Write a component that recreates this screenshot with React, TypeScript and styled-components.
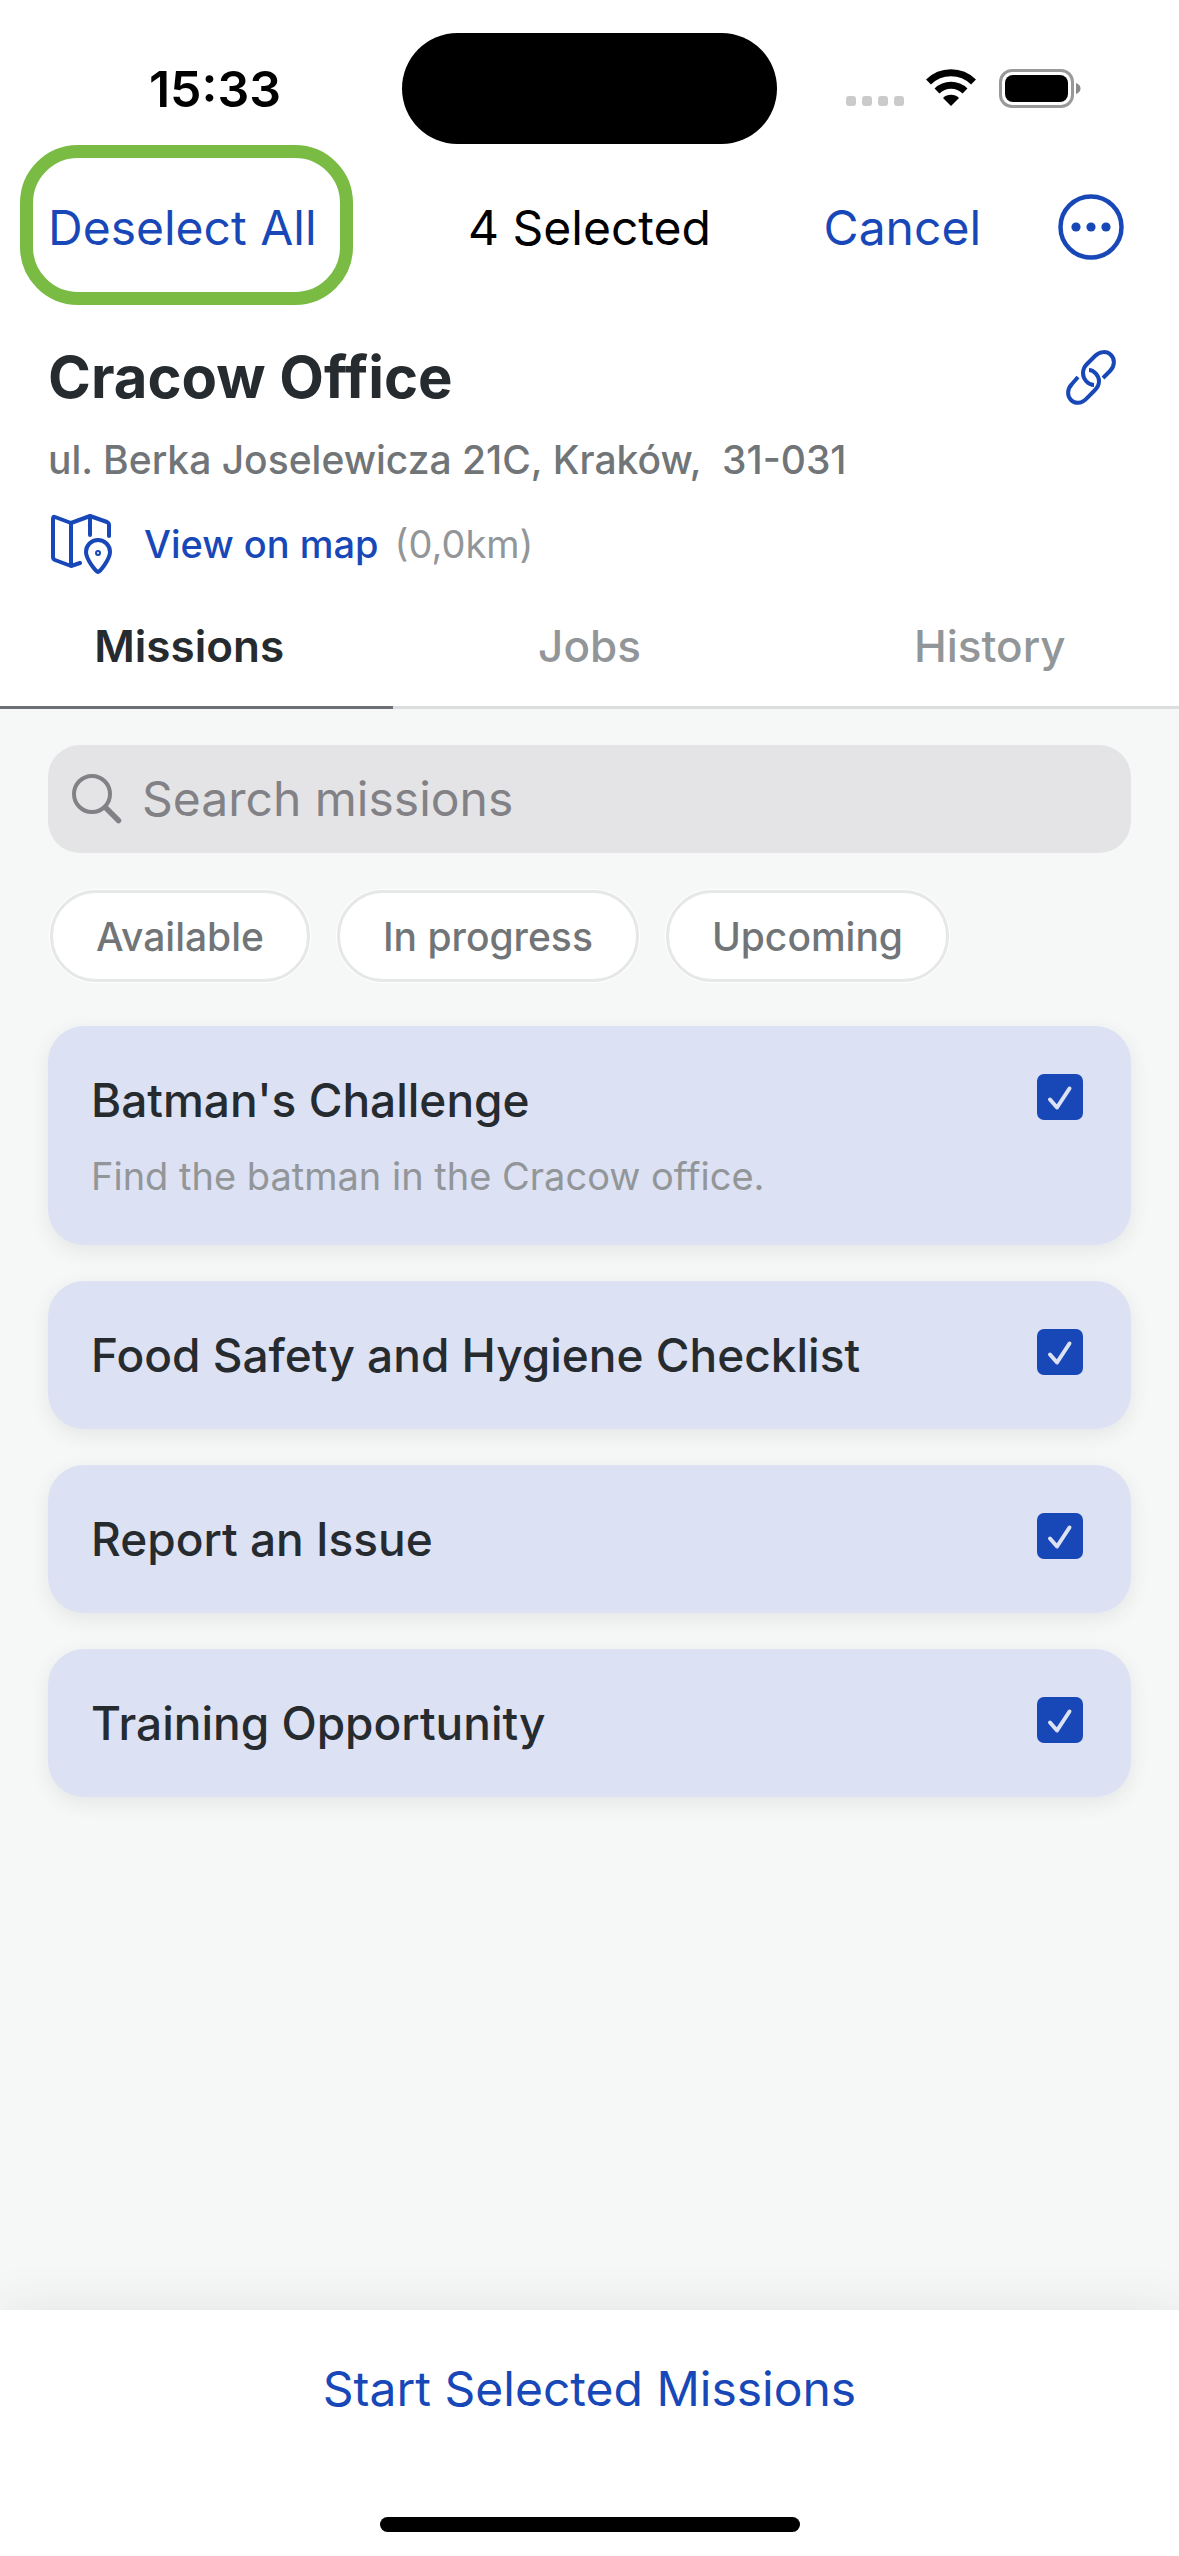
import React, { useState } from "react";
import styled, { createGlobalStyle } from "styled-components";

const BLUE = "#1848b8";
const INK = "#262b2f";
const GREY = "#717578";
const MUTED = "#929698";

const GlobalStyle = createGlobalStyle`
  *, *::before, *::after { box-sizing: border-box; }
  body {
    margin: 0;
    background: #f6f8f7;
    font-family: Inter, "Liberation Sans", sans-serif;
    color: ${INK};
  }
  button, input { font: inherit; }
  h1, h2, p, ul { margin: 0; padding: 0; }
`;

const Screen = styled.div`
  display: flex;
  flex-direction: column;
  min-height: 100vh;
`;

const Header = styled.header`
  background: #fff;
`;

const StatusBar = styled.div`
  display: grid;
  grid-template-columns: 1fr 375px 1fr;
  align-items: center;
  padding-top: 33px;
`;

const Clock = styled.time`
  padding-left: 28px;
  text-align: center;
  font-size: 50px;
  line-height: 60px;
  font-weight: 600;
  color: #000;
`;

const Island = styled.div`
  height: 111px;
  border-radius: 56px;
  background: #000;
`;

const StatusIcons = styled.svg`
  justify-self: end;
  margin-right: 98px;
  width: 236px;
  height: 40px;
`;

const NavBar = styled.nav`
  display: grid;
  grid-template-columns: 1fr auto 1fr;
  align-items: center;
  height: 168px;
  padding: 0 48px;
`;

const TextButton = styled.button`
  justify-self: start;
  padding: 0;
  border: 0;
  background: none;
  color: ${BLUE};
  font-size: 48px;
  line-height: 60px;
  white-space: nowrap;
  cursor: pointer;
`;

const HighlightedButton = styled(TextButton)`
  position: relative;

  &::after {
    content: "";
    position: absolute;
    inset: -53px -36px -47px -28px;
    border: 13px solid #79bb43;
    border-radius: 58px;
    pointer-events: none;
  }
`;

const NavTitle = styled.h2`
  font-size: 48px;
  line-height: 60px;
  font-weight: 400;
  color: #000;
`;

const NavActions = styled.div`
  display: flex;
  justify-content: flex-end;
  align-items: center;
  gap: 77px;
  padding-right: 7px;
`;

const IconButton = styled.button`
  display: block;
  padding: 0;
  border: 0;
  background: none;
  color: ${BLUE};
  cursor: pointer;

  svg { display: block; }
`;

const Place = styled.section`
  display: flex;
  flex-direction: column;
  padding: 29px 58px 12px 48px;
`;

const TitleRow = styled.div`
  display: flex;
  justify-content: space-between;
  align-items: center;
`;

const PlaceName = styled.h1`
  font-size: 58px;
  line-height: 72px;
  font-weight: 700;
`;

const Address = styled.p`
  margin-top: 22px;
  font-size: 39px;
  line-height: 50px;
  font-weight: 500;
  color: ${GREY};
  white-space: pre-wrap;
`;

const MapRow = styled.div`
  display: flex;
  align-items: center;
  margin-top: 29px;
  height: 60px;
  font-size: 38px;
  line-height: 50px;
  color: ${MUTED};
`;

const MapLink = styled.a`
  display: flex;
  align-items: center;
  gap: 32px;
  margin-right: 16px;
  color: ${BLUE};
  font-weight: 500;
  text-decoration: none;
`;

const Tabs = styled.div`
  display: grid;
  grid-template-columns: repeat(3, 1fr);
  gap: 22px;
`;

const Tab = styled.button<{ $active: boolean }>`
  height: 120px;
  padding: 0;
  border: 0;
  background: none;
  font-size: 44px;
  font-weight: ${(p) => (p.$active ? 600 : 500)};
  color: ${(p) => (p.$active ? INK : MUTED)};
  cursor: pointer;
`;

const TabTrack = styled.div<{ $index: number }>`
  height: 3px;
  background: #dcdedd;

  &::before {
    content: "";
    display: block;
    width: 33.33%;
    height: 3px;
    margin-left: calc(33.33% * ${(p) => p.$index});
    background: #6c7074;
  }
`;

const Main = styled.main`
  display: flex;
  flex-direction: column;
  flex: 1;
  padding: 36px 48px;
`;

const SearchBox = styled.label`
  display: flex;
  align-items: center;
  gap: 20px;
  height: 108px;
  padding: 0 24px;
  border-radius: 32px;
  background: #e4e4e6;
  color: #828186;

  svg { flex: none; }
`;

const SearchInput = styled.input`
  flex: 1;
  min-width: 0;
  padding: 0;
  border: 0;
  outline: 0;
  background: none;
  appearance: none;
  font-size: 48px;
  line-height: 60px;
  color: ${INK};

  &::placeholder { color: #828186; opacity: 1; }
`;

const Chips = styled.div`
  display: flex;
  gap: 27px;
  margin: 37px 2px 44px;
`;

const Chip = styled.button`
  height: 92px;
  padding: 0 43px;
  border: 3px solid #e6e7e7;
  border-radius: 46px;
  background: #fff;
  box-shadow: 0 0 0 1px #fff;
  font-size: 39px;
  font-weight: 500;
  color: ${GREY};
  cursor: pointer;
`;

const MissionList = styled.ul`
  display: flex;
  flex-direction: column;
  gap: 36px;
  list-style: none;
`;

const Card = styled.label<{ $selected: boolean }>`
  display: flex;
  justify-content: space-between;
  align-items: flex-start;
  padding: 44px 48px 44px 43px;
  border-radius: 36px;
  background: ${(p) => (p.$selected ? "#dce1f4" : "#fff")};
  box-shadow: 0 6px 20px rgba(40, 50, 40, 0.09);
  cursor: pointer;
`;

const CardText = styled.span`
  display: flex;
  flex-direction: column;
  gap: 21px;
`;

const MissionName = styled.span`
  font-size: 46px;
  line-height: 60px;
  font-weight: 500;
`;

const MissionNote = styled.span`
  font-size: 38px;
  line-height: 50px;
  color: ${MUTED};
`;

const CheckCell = styled.span`
  display: grid;
  flex: none;
  margin-top: 4px;

  > * { grid-area: 1 / 1; }
  svg { pointer-events: none; }
`;

const CheckBox = styled.input`
  appearance: none;
  width: 46px;
  height: 46px;
  margin: 0;
  border: 3px solid ${BLUE};
  border-radius: 7px;

  &:checked { background: ${BLUE}; }
`;

const Footer = styled.footer`
  display: flex;
  flex-direction: column;
  align-items: center;
  padding: 49px 48px 24px;
  background: #fff;
  box-shadow: 0 0 48px rgba(40, 50, 40, 0.1);
`;

const StartButton = styled(TextButton)`
  align-self: center;
`;

const HomeIndicator = styled.div`
  width: 420px;
  max-width: 60%;
  height: 15px;
  margin-top: 98px;
  border-radius: 8px;
  background: #000;
`;

const missions = [
  { name: "Batman's Challenge", note: "Find the batman in the Cracow office." },
  { name: "Food Safety and Hygiene Checklist" },
  { name: "Report an Issue" },
  { name: "Training Opportunity" },
];

const tabs = ["Missions", "Jobs", "History"];
const filters = ["Available", "In progress", "Upcoming"];

function StatusGlyphs() {
  return (
    <StatusIcons viewBox="0 0 236 40" aria-hidden="true">
      {[1, 17, 33, 49].map((x) => (
        <rect key={x} x={x} y="27" width="10" height="10" rx="3" fill="#cbcbcb" />
      ))}
      <g fill="none" stroke="#000" strokeWidth="7">
        <path d="M83.500 13a32 32 0 0 1 45 0" />
        <path d="M92 22a20 20 0 0 1 28 0" />
      </g>
      <path d="M106 37l-8-8a11.500 11.500 0 0 1 16 0z" />
      <rect x="155.500" y="1.500" width="72" height="36" rx="11.500" fill="none" stroke="#999" strokeWidth="3" />
      <rect x="160" y="6" width="63" height="27" rx="8" />
      <path d="M231 14c3 1 4.500 3 4.500 5.500S234 24 231 25z" fill="#8a8a8a" />
    </StatusIcons>
  );
}

export default function App() {
  const [picked, setPicked] = useState(missions.map(() => true));
  const [tab, setTab] = useState(0);
  const count = picked.filter(Boolean).length;

  return (
    <Screen>
      <GlobalStyle />
      <Header>
        <StatusBar>
          <Clock>15:33</Clock>
          <Island />
          <StatusGlyphs />
        </StatusBar>
        <NavBar>
          <HighlightedButton onClick={() => setPicked(missions.map(() => false))}>Deselect All</HighlightedButton>
          <NavTitle>{count} Selected</NavTitle>
          <NavActions>
            <TextButton>Cancel</TextButton>
            <IconButton aria-label="More options">
              <svg width="66" height="68" viewBox="0 0 66 68">
                <circle cx="33" cy="33" r="30.500" fill="none" stroke="currentColor" strokeWidth="4.500" />
                {[18, 33, 48].map((x) => (
                  <circle key={x} cx={x} cy="33" r="4.600" fill="currentColor" />
                ))}
              </svg>
            </IconButton>
          </NavActions>
        </NavBar>
        <Place>
          <TitleRow>
            <PlaceName>Cracow Office</PlaceName>
            <IconButton aria-label="Copy link">
              <svg width="60" height="60" viewBox="0 0 60 60" fill="none" stroke="currentColor" strokeWidth="4">
                <path d="M28 23C33 23 38 29 38 34c0 3-1 6-4 9l-8 8c-5 6-12 6-16 2s-4-11 1-16l6-7" />
                <path d="M33 38C27 38 22 32 22 26c0-3 1-6 4-9l8-8c5-5 12-5 16-1s4 11-1 16l-7 7" />
              </svg>
            </IconButton>
          </TitleRow>
          <Address>{"ul. Berka Joselewicza 21C, Kraków,  31-031"}</Address>
          <MapRow>
            <MapLink href="#map">
              <svg width="64" height="60" viewBox="0 0 64 60" fill="none" stroke="currentColor" strokeWidth="4" strokeLinecap="round" strokeLinejoin="round">
                <path d="M61 22V11q0-2-2-3L42 2 23 9 7 3Q5 2 5 5v38q0 2 2 3l16 6 9-3" />
                <path d="M23 9v42M42 3v18" />
                <path d="M50 58c-2 0-12-13-12-20a12 12 0 0 1 24 0c0 7-10 20-12 20z" />
                <circle cx="50" cy="39" r="1" />
              </svg>
              View on map
            </MapLink>
            <span>(0,0km)</span>
          </MapRow>
        </Place>
        <Tabs role="tablist">
          {tabs.map((name, i) => (
            <Tab key={name} role="tab" aria-selected={i === tab} $active={i === tab} onClick={() => setTab(i)}>
              {name}
            </Tab>
          ))}
        </Tabs>
        <TabTrack $index={tab} />
      </Header>
      <Main>
        <SearchBox>
          <svg width="50" height="50" viewBox="0 0 50 50" fill="none" stroke="currentColor" strokeLinecap="round">
            <circle cx="20" cy="20" r="18" strokeWidth="4" />
            <path d="M33.500 33.500L46.500 46.500" strokeWidth="5.500" />
          </svg>
          <SearchInput type="search" placeholder="Search missions" aria-label="Search missions" />
        </SearchBox>
        <Chips>
          {filters.map((name) => (
            <Chip key={name}>{name}</Chip>
          ))}
        </Chips>
        <MissionList>
          {missions.map((m, i) => (
            <li key={m.name}>
              <Card $selected={picked[i]}>
                <CardText>
                  <MissionName>{m.name}</MissionName>
                  {m.note && <MissionNote>{m.note}</MissionNote>}
                </CardText>
                <CheckCell>
                  <CheckBox
                    type="checkbox"
                    checked={picked[i]}
                    onChange={() => setPicked(picked.map((on, j) => (j === i ? !on : on)))}
                  />
                  {picked[i] && (
                    <svg width="46" height="46" viewBox="0 0 46 46" fill="none" stroke="#dce1f4" strokeWidth="4" strokeLinecap="round" strokeLinejoin="round">
                      <path d="M13 25.500L20 33.500L32.500 14.500" />
                    </svg>
                  )}
                </CheckCell>
              </Card>
            </li>
          ))}
        </MissionList>
      </Main>
      <Footer>
        <StartButton>Start Selected Missions</StartButton>
        <HomeIndicator />
      </Footer>
    </Screen>
  );
}
